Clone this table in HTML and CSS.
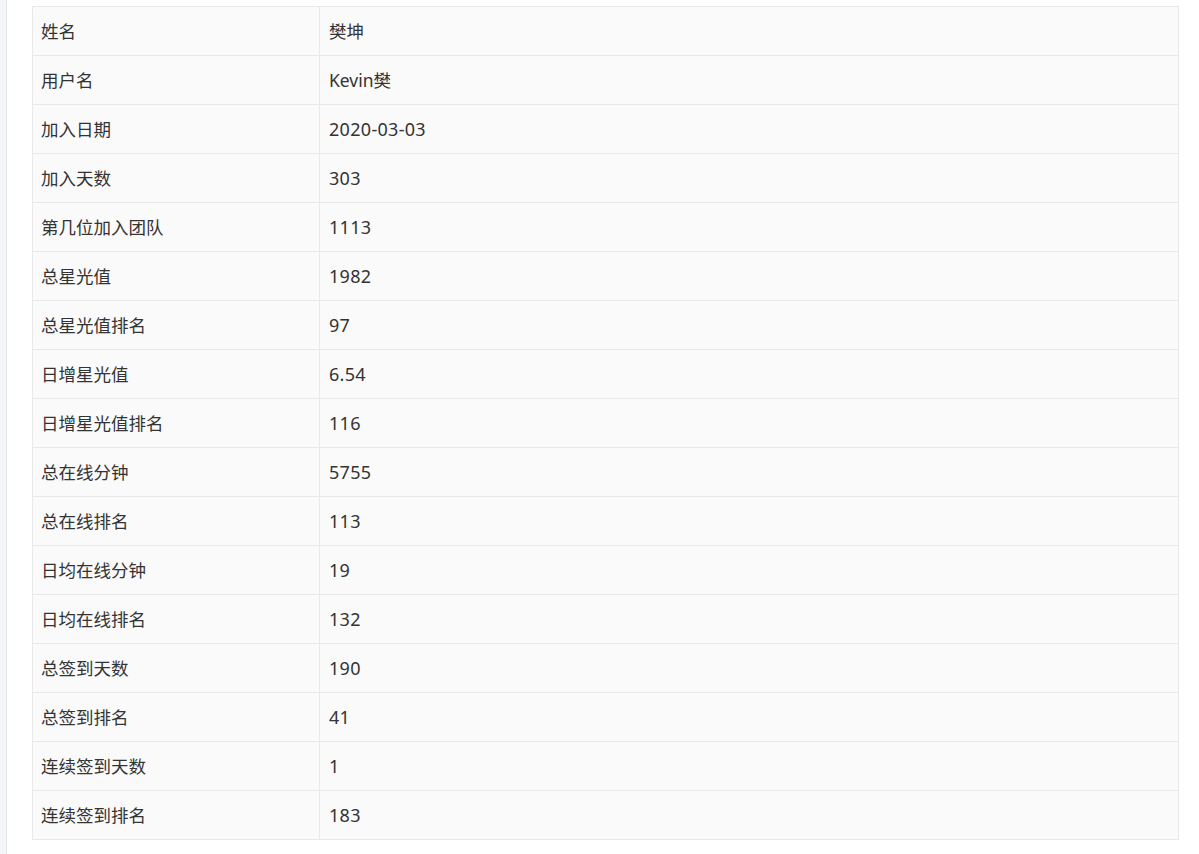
FILE: index.html
```html
<!DOCTYPE html>
<html lang="zh-CN">
<head>
<meta charset="utf-8">
<title>用户信息</title>
<link rel="stylesheet" href="styles.css">
</head>
<body>
<div class="page">
  <aside class="side"></aside>
  <main class="content">
    <table class="info">
      <tbody>
        <tr><td class="k">姓名</td><td class="v">樊坤</td></tr>
        <tr><td class="k">用户名</td><td class="v">Kevin樊</td></tr>
        <tr><td class="k">加入日期</td><td class="v num">2020-03-03</td></tr>
        <tr><td class="k">加入天数</td><td class="v num">303</td></tr>
        <tr><td class="k">第几位加入团队</td><td class="v num">1113</td></tr>
        <tr><td class="k">总星光值</td><td class="v num">1982</td></tr>
        <tr><td class="k">总星光值排名</td><td class="v num">97</td></tr>
        <tr><td class="k">日增星光值</td><td class="v num">6.54</td></tr>
        <tr><td class="k">日增星光值排名</td><td class="v num">116</td></tr>
        <tr><td class="k">总在线分钟</td><td class="v num">5755</td></tr>
        <tr><td class="k">总在线排名</td><td class="v num">113</td></tr>
        <tr><td class="k">日均在线分钟</td><td class="v num">19</td></tr>
        <tr><td class="k">日均在线排名</td><td class="v num">132</td></tr>
        <tr><td class="k">总签到天数</td><td class="v num">190</td></tr>
        <tr><td class="k">总签到排名</td><td class="v num">41</td></tr>
        <tr><td class="k">连续签到天数</td><td class="v num">1</td></tr>
        <tr><td class="k">连续签到排名</td><td class="v num">183</td></tr>
      </tbody>
    </table>
  </main>
</div>
</body>
</html>
```
FILE: styles.css
```css
html, body {
  margin: 0;
  padding: 0;
  background: #ffffff;
}
body {
  font-family: "Noto Sans", "Noto Sans CJK SC", sans-serif;
  font-size: 17.5px;
  color: #333333;
}
.page {
  display: flex;
  min-height: 854px;
}
.side {
  width: 6px;
  background: #f4f5f9;
  border-right: 1px solid #e4e5ec;
  flex: none;
}
.content {
  padding: 6px 0 0 25px;
}
.info {
  width: 1147px;
  border-collapse: collapse;
  background: #fafafa;
}
.info td {
  border: 1px solid #e8e8e8;
  height: 49px;
  padding: 0 8px;
  box-sizing: border-box;
  vertical-align: middle;
  line-height: 24px;
}
.info td.k {
  width: 287px;
}
.info td.v {
  padding-left: 9px;
}
.info td.num {
  font-size: 18px;
  letter-spacing: 0.3px;
}
```
